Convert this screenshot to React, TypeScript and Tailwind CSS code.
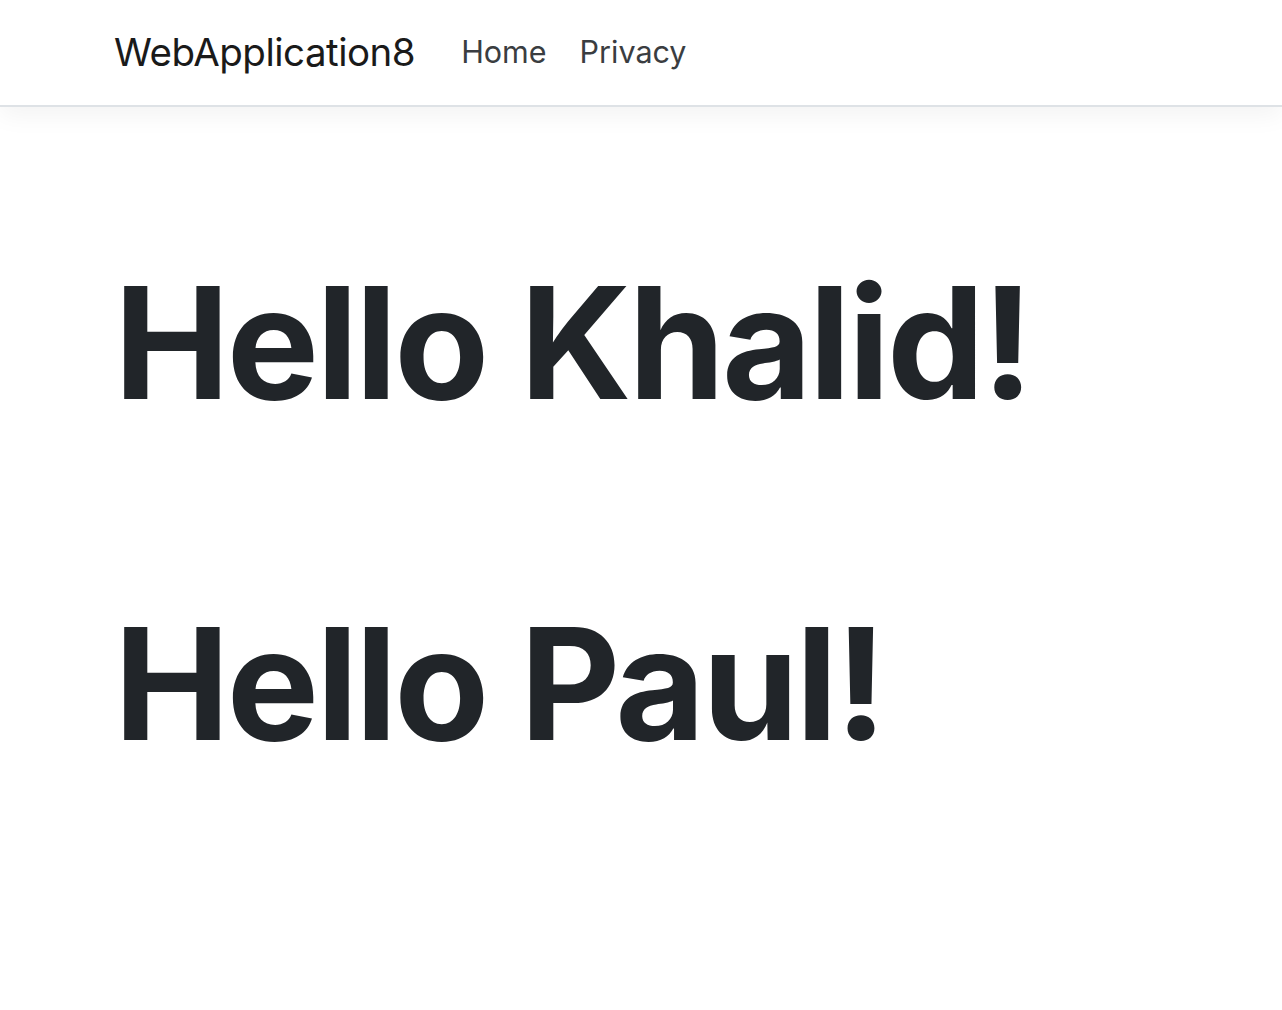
export default function App() {
  const names = ["Khalid", "Paul"];

  return (
    <div className="min-h-screen bg-white font-['Inter','Liberation_Sans',sans-serif] text-[#212529]">
      {/* Navbar */}
      <header className="h-[107px] border-b-2 border-[#dee2e6] bg-white shadow-[0_8px_24px_rgba(0,0,0,0.05)]">
        <nav className="flex h-full items-center px-[114px]">
          <a className="mr-[46px] text-[38.5px] leading-none tracking-[-0.5px] text-[#1a1a1a]">
            WebApplication8
          </a>
          <ul className="flex items-center gap-[33px] text-[30.5px] leading-none text-[#3a3d41]">
            <li>Home</li>
            <li>Privacy</li>
          </ul>
        </nav>
      </header>

      {/* Content */}
      <main className="px-[114px] pt-[158px]">
        {names.map((name) => (
          <h1
            key={name}
            className="mb-[186px] text-[155px] font-bold leading-[155px] tracking-[-3px]"
          >
            Hello {name}!
          </h1>
        ))}
      </main>
    </div>
  );
}
